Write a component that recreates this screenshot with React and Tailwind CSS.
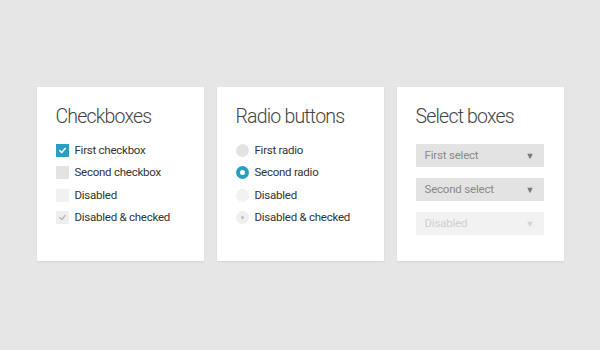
import React from "react";

const Check = ({ color }) => (
  <svg width="9" height="9" viewBox="0 0 10 10" fill="none">
    <path d="M2 5.2 L4.2 7.2 L8 2.8" stroke={color} strokeWidth="1.8" strokeLinecap="round" strokeLinejoin="round" />
  </svg>
);

function Box({ kind }) {
  if (kind === "checked")
    return <span className="w-[13px] h-[13px] bg-[#2a9fc2] flex items-center justify-center"><Check color="#fff" /></span>;
  if (kind === "disabledChecked")
    return <span className="w-[13px] h-[13px] bg-[#efefef] flex items-center justify-center"><Check color="#bbb" /></span>;
  if (kind === "disabled") return <span className="w-[13px] h-[13px] bg-[#f1f1f1]" />;
  return <span className="w-[13px] h-[13px] bg-[#e3e3e3]" />;
}

function Radio({ kind }) {
  if (kind === "checked")
    return <span className="w-[13px] h-[13px] rounded-full bg-[#2a9fc2] flex items-center justify-center"><span className="w-[5px] h-[5px] rounded-full bg-white" /></span>;
  if (kind === "disabledChecked")
    return <span className="w-[13px] h-[13px] rounded-full bg-[#efefef] flex items-center justify-center"><span className="w-[3px] h-[3px] rounded-full bg-[#bbb]" /></span>;
  if (kind === "disabled") return <span className="w-[13px] h-[13px] rounded-full bg-[#f1f1f1]" />;
  return <span className="w-[13px] h-[13px] rounded-full bg-[#e3e3e3]" />;
}

function Card({ title, children }) {
  return (
    <div className="w-[167px] h-[174px] bg-white shadow-[0_1px_2px_rgba(0,0,0,0.08)] pl-[19px] pt-[16px]">
      <h2 className="text-[19.5px] leading-[28px] font-light text-[#444] tracking-[-0.8px]" style={{ fontFamily: "Roboto, sans-serif" }}>{title}</h2>
      <div className="mt-[8px]">{children}</div>
    </div>
  );
}

const Row = ({ control, label }) => (
  <div className="flex items-center h-[22.5px] gap-[6px]">
    {control}
    <span className="text-[11.5px] text-[#333] tracking-[-0.25px]" style={{ fontFamily: "Roboto, sans-serif" }}>{label}</span>
  </div>
);

function Select({ label, disabled }) {
  return (
    <div className={`w-[128px] h-[23px] flex items-center justify-between pl-[9px] pr-[9px] ${disabled ? "bg-[#f2f2f2] text-[#cfcfcf]" : "bg-[#e3e3e3] text-[#8a8a8a]"}`}>
      <span className="text-[11.5px] tracking-[-0.2px]" style={{ fontFamily: "Roboto, sans-serif" }}>{label}</span>
      <span className={`text-[9px] ${disabled ? "text-[#d5d5d5]" : "text-[#777]"}`}>▼</span>
    </div>
  );
}

export default function App() {
  return (
    <div className="w-[600px] h-[350px] bg-[#e6e6e6] flex justify-center pt-[87px] gap-[13px]">
      <Card title="Checkboxes">
        <Row control={<Box kind="checked" />} label="First checkbox" />
        <Row control={<Box kind="" />} label="Second checkbox" />
        <Row control={<Box kind="disabled" />} label="Disabled" />
        <Row control={<Box kind="disabledChecked" />} label="Disabled & checked" />
      </Card>
      <Card title="Radio buttons">
        <Row control={<Radio kind="" />} label="First radio" />
        <Row control={<Radio kind="checked" />} label="Second radio" />
        <Row control={<Radio kind="disabled" />} label="Disabled" />
        <Row control={<Radio kind="disabledChecked" />} label="Disabled & checked" />
      </Card>
      <Card title="Select boxes">
        <div className="flex flex-col gap-[11px] pt-[5px]">
          <Select label="First select" />
          <Select label="Second select" />
          <Select label="Disabled" disabled />
        </div>
      </Card>
    </div>
  );
}
